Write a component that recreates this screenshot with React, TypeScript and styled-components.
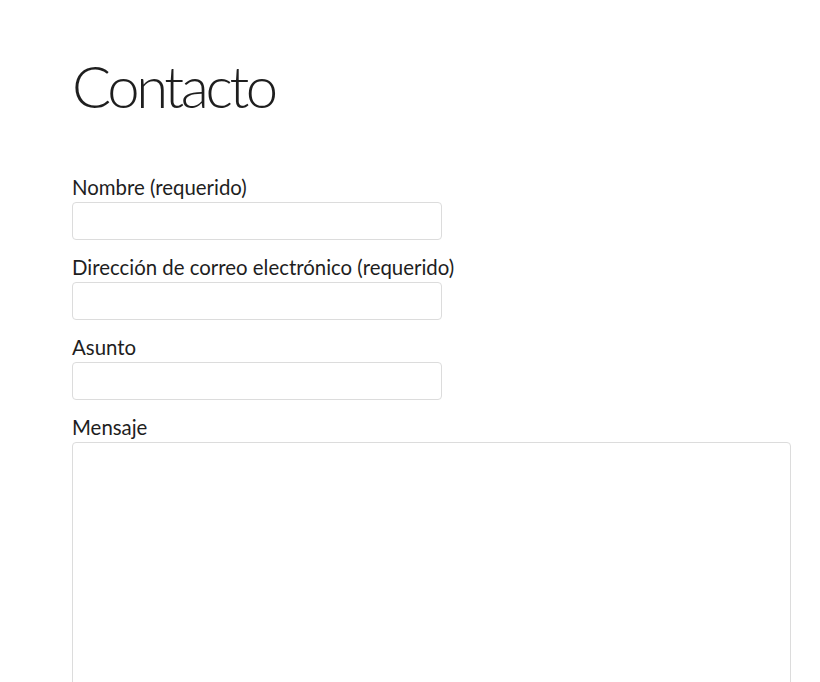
import React from "react";
import styled, { createGlobalStyle } from "styled-components";

const GlobalStyle = createGlobalStyle`
  html, body {
    margin: 0;
    padding: 0;
    background: #ffffff;
  }
  body {
    font-family: Lato, "Open Sans", sans-serif;
    color: #222222;
  }
  * { box-sizing: border-box; }
`;

const Page = styled.main`
  padding: 50px 29px 0 72px;
  height: 682px;
  overflow: hidden;
`;

const Title = styled.h1`
  margin: 0 0 52px;
  font-size: 58px;
  line-height: 72px;
  font-weight: 300;
  letter-spacing: -3.4px;
  color: #1e1e1e;
`;

const Form = styled.form`
  display: flex;
  flex-direction: column;
`;

const Field = styled.div`
  display: flex;
  flex-direction: column;
  margin-bottom: 14px;
`;

const Label = styled.label`
  display: block;
  font-size: 20.4px;
  line-height: 26px;
  margin-bottom: 2px;
  color: #1e1e1e;
`;

const Input = styled.input`
  width: 370px;
  height: 38px;
  border: 1px solid #dcdcdc;
  border-radius: 4px;
  background: #fff;
  padding: 6px 10px;
  font: inherit;
  outline: none;
`;

const TextArea = styled.textarea`
  width: 100%;
  height: 320px;
  border: 1px solid #dcdcdc;
  border-radius: 4px;
  background: #fff;
  padding: 6px 10px;
  font: inherit;
  resize: none;
  outline: none;
`;

export default function App() {
  return (
    <>
      <GlobalStyle />
      <Page>
        <Title>Contacto</Title>
        <Form onSubmit={(e) => e.preventDefault()}>
          <Field>
            <Label htmlFor="nombre">Nombre (requerido)</Label>
            <Input id="nombre" type="text" />
          </Field>
          <Field>
            <Label htmlFor="email">Dirección de correo electrónico (requerido)</Label>
            <Input id="email" type="email" />
          </Field>
          <Field>
            <Label htmlFor="asunto">Asunto</Label>
            <Input id="asunto" type="text" />
          </Field>
          <Field>
            <Label htmlFor="mensaje">Mensaje</Label>
            <TextArea id="mensaje" />
          </Field>
        </Form>
      </Page>
    </>
  );
}
